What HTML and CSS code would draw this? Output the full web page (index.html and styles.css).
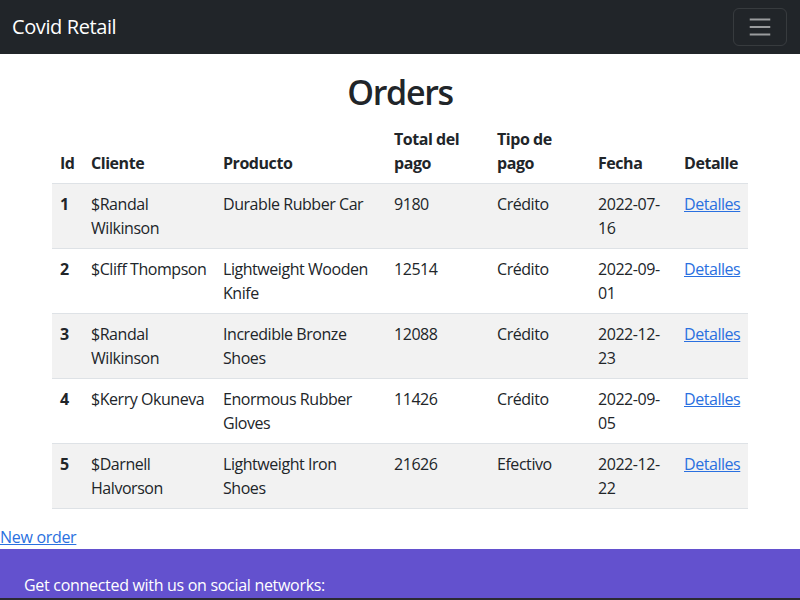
FILE: index.html
```html
<!DOCTYPE html>
<html lang="es">
<head>
<meta charset="utf-8">
<title>Covid Retail</title>
<link rel="stylesheet" href="styles.css">
</head>
<body>
<nav class="navbar">
  <a class="brand" href="#">Covid Retail</a>
  <button class="toggler" type="button" aria-label="Toggle navigation">
    <svg class="toggler-icon" viewBox="0 0 30 30" width="28" height="28"><path d="M4 7h22M4 15h22M4 23h22" stroke="rgba(255,255,255,0.55)" stroke-width="2" stroke-linecap="butt" fill="none"/></svg>
  </button>
</nav>
<main class="container">
  <h1 class="title">Orders</h1>
  <table class="orders">
    <colgroup>
      <col class="c-id"><col class="c-cli"><col class="c-prod"><col class="c-tot"><col class="c-tipo"><col class="c-fecha"><col class="c-det">
    </colgroup>
    <thead>
      <tr><th>Id</th><th>Cliente</th><th>Producto</th><th>Total del pago</th><th>Tipo de pago</th><th>Fecha</th><th>Detalle</th></tr>
    </thead>
    <tbody>
      <tr><th>1</th><td>$Randal Wilkinson</td><td>Durable Rubber Car</td><td>9180</td><td>Crédito</td><td>2022-07-16</td><td><a href="#">Detalles</a></td></tr>
      <tr><th>2</th><td class="nw">$Cliff Thompson</td><td>Lightweight Wooden Knife</td><td>12514</td><td>Crédito</td><td>2022-09-01</td><td><a href="#">Detalles</a></td></tr>
      <tr><th>3</th><td>$Randal Wilkinson</td><td>Incredible Bronze Shoes</td><td>12088</td><td>Crédito</td><td>2022-12-23</td><td><a href="#">Detalles</a></td></tr>
      <tr><th>4</th><td class="nw">$Kerry Okuneva</td><td>Enormous Rubber Gloves</td><td>11426</td><td>Crédito</td><td>2022-09-05</td><td><a href="#">Detalles</a></td></tr>
      <tr><th>5</th><td>$Darnell Halvorson</td><td>Lightweight Iron Shoes</td><td>21626</td><td>Efectivo</td><td>2022-12-22</td><td><a href="#">Detalles</a></td></tr>
    </tbody>
  </table>
</main>
<a class="new-order" href="#">New order</a>
<footer class="footer">
  <section class="social">
    <span>Get connected with us on social networks:</span>
  </section>
  <section class="footer-bottom"></section>
</footer>
</body>
</html>
```
FILE: styles.css
```css
* { box-sizing: border-box; }
html, body { margin: 0; }
body {
  font-family: "Open Sans", "Noto Sans", "Liberation Sans", sans-serif;
  font-size: 16px;
  line-height: 24px;
  color: #212529;
  background: #fff;
  overflow: hidden;
}
a { color: #2a70e0; text-decoration: underline; }

.navbar {
  height: 54px;
  background: #212529;
  display: flex;
  align-items: center;
  justify-content: space-between;
  padding: 0 13px 0 12px;
}
.brand {
  color: #fff;
  text-decoration: none;
  font-size: 20px;
  line-height: 30px;
  letter-spacing: -0.4px;
}
.toggler {
  width: 54px;
  height: 38px;
  background: transparent;
  border: 1px solid rgba(255,255,255,0.1);
  border-radius: 6px;
  padding: 0;
  display: flex;
  align-items: center;
  justify-content: center;
}
.toggler-icon { display: block; }

.container {
  width: 720px;
  margin: 0 auto;
  padding: 0 12px;
}
.title {
  margin: 18px 0 6px;
  text-align: center;
  font-size: 34px;
  line-height: 40.8px;
  font-weight: 600;
  letter-spacing: -1.3px;
}

.orders {
  width: 100%;
  table-layout: fixed;
  border-collapse: collapse;
  margin-bottom: 16px;
  letter-spacing: -0.45px;
}
.c-id { width: 31px; }
.c-cli { width: 132px; }
.c-prod { width: 171px; }
.c-tot { width: 103px; }
.c-tipo { width: 101px; }
.c-fecha { width: 86px; }
.c-det { width: 72px; }
.orders th, .orders td {
  padding: 8px;
  text-align: left;
  vertical-align: top;
  border-bottom: 1px solid #dee2e6;
}
.orders th { font-weight: 700; }
.orders thead th { vertical-align: bottom; }
.orders tbody tr:nth-child(odd) { background: #f2f2f2; }
.orders .nw { white-space: nowrap; }

.new-order {
  display: block;
  width: max-content;
  line-height: 24px;
  letter-spacing: -0.3px;
}

.footer { margin-top: 0; }
.social {
  background: #6351ce;
  color: #fff;
  height: 49px;
  padding: 24px 24px 0;
  display: flex;
  justify-content: space-between;
  letter-spacing: -0.3px;
}
.footer-bottom {
  background: #2b2a33;
  height: 24px;
}
```
